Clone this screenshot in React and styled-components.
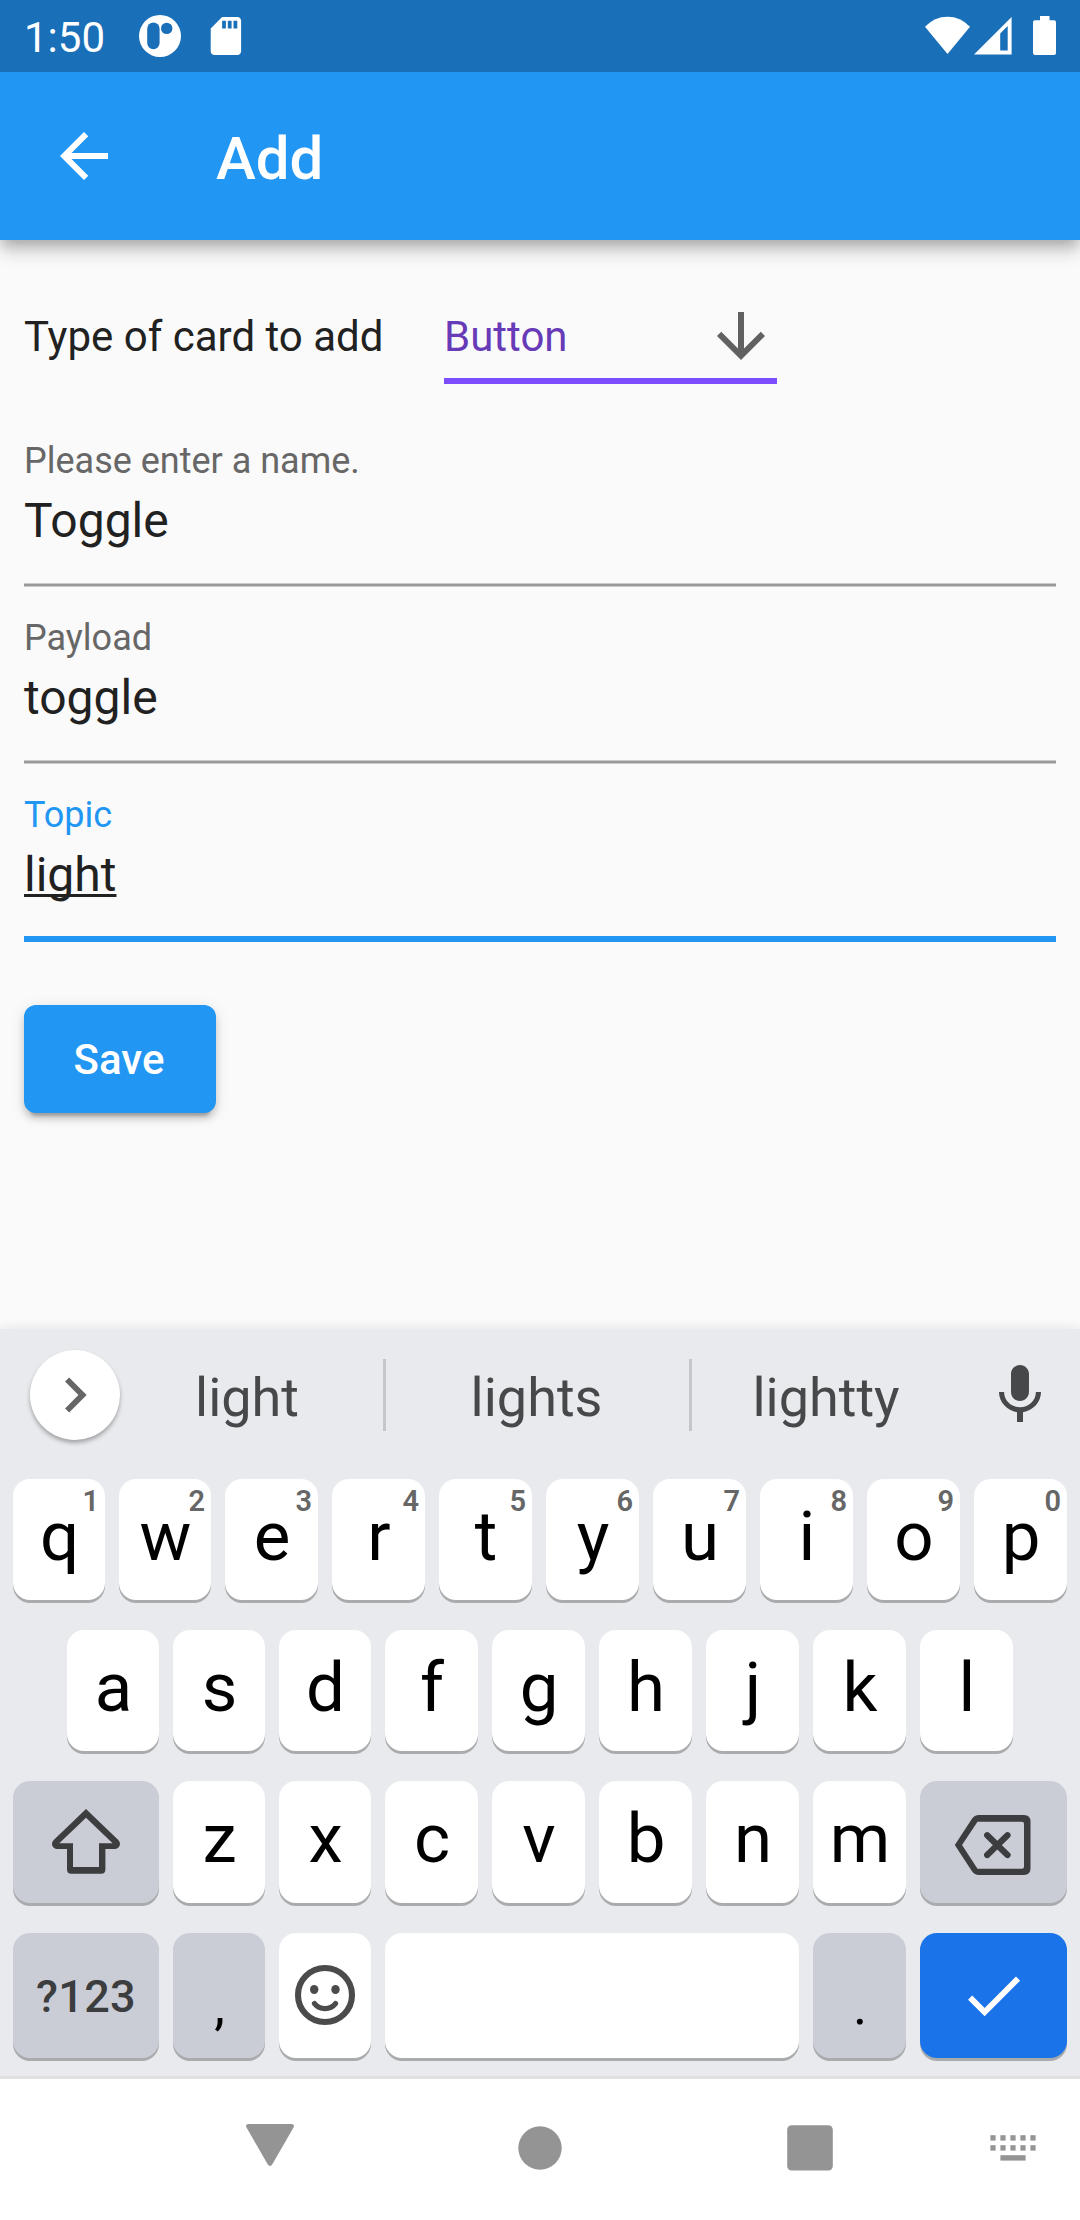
import React from "react";
import styled, { createGlobalStyle } from "styled-components";

const GlobalStyle = createGlobalStyle`
  * { box-sizing: border-box; }
  body { margin: 0; background: #fafafa; }
  svg { display: block; flex: none; }
`;

const Screen = styled.div`
  display: flex;
  flex-direction: column;
  width: 1080px;
  height: 2220px;
  overflow: hidden;
  background: #fafafa;
  color: #212121;
  font-family: Roboto, "Liberation Sans", sans-serif;
`;

/* Status bar */

const StatusBar = styled.div`
  position: relative;
  z-index: 1;
  display: flex;
  justify-content: space-between;
  align-items: flex-start;
  height: 72px;
  background: #1a70b8;
  color: #fff;
`;

const Clock = styled.span`
  width: 113px;
  font-size: 42px;
  line-height: 76px;
`;

const StatusStart = styled.div`
  display: flex;
  padding-left: 24px;
`;

const StatusEnd = styled.div`
  display: flex;
`;

/* App bar */

const AppBar = styled.header`
  display: flex;
  align-items: center;
  height: 168px;
  padding-left: 48px;
  background: #2196f3;
  color: #fff;
  box-shadow: 0 6px 12px -3px rgba(0, 0, 0, 0.2), 0 12px 15px 0 rgba(0, 0, 0, 0.14),
    0 3px 30px 0 rgba(0, 0, 0, 0.08);
`;

const Title = styled.h1`
  margin: 5px 0 0 96px;
  font-size: 60px;
  font-weight: 500;
  line-height: 72px;
`;

/* Form */

const Form = styled.main`
  display: flex;
  flex-direction: column;
  flex: 1;
  padding: 60px 24px 0;
`;

const TypeRow = styled.div`
  display: flex;
  height: 84px;
  margin-bottom: 26px;
  font-size: 42px;
  line-height: 73px;
`;

const TypeLabel = styled.span`
  width: 420px;
`;

const Dropdown = styled.div`
  display: flex;
  justify-content: space-between;
  width: 333px;
  border-bottom: 6px solid #7c4dff;
  color: #673ab7;
`;

const Field = styled.div`
  display: flex;
  flex-direction: column;
  height: 177px;
  padding-top: 27px;
`;

const FieldLabel = styled.label`
  font-size: 36px;
  line-height: 48px;
  color: ${(p) => (p.$active ? "#2196f3" : "#676767")};
`;

const FieldValue = styled.span`
  align-self: flex-start;
  margin-top: 6px;
  font-size: 48px;
  line-height: 60px;
  text-decoration: ${(p) => (p.$active ? "underline 2.5px" : "none")};
  text-underline-offset: 3px;
  text-decoration-skip-ink: none;
`;

const FieldLine = styled.div`
  flex: none;
  height: ${(p) => (p.$active ? 6 : 4)}px;
  margin-top: ${(p) => (p.$active ? 31 : 32)}px;
  background: ${(p) => (p.$active ? "#2196f3" : "#999")};
  border: solid ${(p) => (p.$active ? "#2196f3" : "#c9c9c9")};
  border-width: 1px 0;
`;

const SaveButton = styled.button`
  width: 192px;
  height: 108px;
  margin-top: 64px;
  padding: 2px 2px 0 0;
  border: 0;
  border-radius: 12px;
  background: #2196f3;
  color: #fff;
  font: 500 42px/1.2 Roboto, sans-serif;
  box-shadow: 0 9px 3px -6px rgba(0, 0, 0, 0.2), 0 6px 6px 0 rgba(0, 0, 0, 0.14),
    0 3px 15px 0 rgba(0, 0, 0, 0.12);
`;

/* Keyboard */

const Keyboard = styled.section`
  height: 750px;
  background: #e8eaed;
  border-bottom: 3px solid #e0e0e0;
  box-shadow: 0 0 12px rgba(0, 0, 0, 0.1);
`;

const Strip = styled.div`
  display: flex;
  align-items: center;
  height: 150px;
  padding: 0 24px 18px 30px;
`;

const Expand = styled.div`
  display: flex;
  align-items: center;
  justify-content: center;
  width: 90px;
  height: 90px;
  border-radius: 50%;
  background: #fff;
  box-shadow: 0 3px 4px rgba(0, 0, 0, 0.3);
`;

const Suggestion = styled.span`
  width: ${(p) => p.$width}px;
  padding-right: ${(p) => p.$shift || 0}px;
  padding-top: 5px;
  font-size: 54px;
  line-height: 66px;
  text-align: center;
  color: #47484a;
`;

const Divider = styled.i`
  width: 3px;
  height: 72px;
  background: #c4c6c9;
`;

const Mic = styled.div`
  margin-left: 24px;
`;

const KeyRow = styled.div`
  display: flex;
  gap: 14px;
  height: ${(p) => p.$height}px;
  margin-bottom: 30px;
  padding-left: ${(p) => p.$indent || 13}px;
`;

const keyFill = { light: "#fff", dark: "#cacdd5", accent: "#1a73e8" };

const Key = styled.div`
  position: relative;
  display: flex;
  align-items: center;
  justify-content: center;
  flex: none;
  width: ${(p) => p.$width}px;
  border-radius: 17px;
  background: ${(p) => keyFill[p.$tone || "light"]};
  box-shadow: 0 3px 0 #a9abad;
`;

const Letter = styled.span`
  padding: 0 0 6px 1px;
  font-size: 69px;
  line-height: 80px;
  color: #000;
`;

const Hint = styled.span`
  position: absolute;
  top: 5px;
  right: 6px;
  font-size: 29px;
  font-weight: 600;
  line-height: 34px;
  color: #666;
`;

const ModeText = styled.span`
  padding-top: 1px;
  font-size: 45px;
  font-weight: 500;
  letter-spacing: 0.3px;
  color: #3c3d3f;
`;

const Punctuation = styled.span`
  padding: 21px 0 0 1px;
  font-size: 54px;
  line-height: 64px;
  color: #000;
`;

const Emoji = styled.div`
  padding-bottom: 1px;
`;

/* System navigation */

const NavBar = styled.nav`
  display: flex;
  height: 141px;
  padding: 0 9px 3px 135px;
  background: #fff;
`;

const NavItem = styled.div`
  display: flex;
  align-items: center;
  justify-content: center;
  width: ${(p) => p.$width || 270}px;
`;

const Material = ({ d, size = 72, fill = "#fff" }) => (
  <svg width={size} height={size} viewBox="0 0 24 24" fill={fill}>
    <path d={d} />
  </svg>
);

const BACK = "M20 11H7.83l5.59-5.59L12 4l-8 8 8 8 1.41-1.41L7.83 13H20v-2z";
const DOWN = "M20 12l-1.41-1.41L13 16.17V4h-2v12.17l-5.58-5.59L4 12l8 8 8-8z";
const CHEVRON = "M10 6L8.59 7.41 13.17 12l-4.58 4.59L10 18l6-6z";
const CHECK = "M9 16.2L4.8 12l-1.4 1.4L9 19 21 7l-1.4-1.4L9 16.2z";
const MIC =
  "M12 14c1.66 0 2.99-1.34 2.99-3L15 5c0-1.66-1.34-3-3-3S9 3.34 9 5v6c0 1.66 1.34 3 3 3zm5.3-3c0 3-2.54 5.1-5.3 5.1S6.7 14 6.7 11H5c0 3.41 2.72 6.23 6 6.72V21h2v-3.28c3.28-.48 6-3.3 6-6.72h-1.7z";

const Notifications = () => (
  <svg width="120" height="72" viewBox="137 0 120 72" fill="#fff">
    <circle cx="160" cy="36" r="21" />
    <rect x="147.2" y="22.5" width="12.4" height="26.8" rx="6.2" fill="#1a70b8" />
    <circle cx="166.7" cy="28.4" r="5.7" fill="#1a70b8" />
    <path
      transform="translate(203.1 13.2) scale(1.9)"
      d="M18 2h-8L4.02 8 4 20c0 1.1.9 2 2 2h12c1.1 0 2-.9 2-2V4c0-1.1-.9-2-2-2zm-6 6h-2V4h2v4zm3 0h-2V4h2v4zm3 0h-2V4h2v4z"
    />
  </svg>
);

const Signals = () => (
  <svg width="180" height="72" viewBox="900 0 180 72" fill="#fff">
    <path d="M947.5 54L925 26.7Q934.500 16.800 947.500 16.800T970 26.700z" />
    <path fillRule="evenodd" d="M974 54.500L1011.600 17V54.500zM1000.200 33.500V50.400H1007.700V26z" />
    <path d="M1040 16H1049.500V20.300H1054Q1056 20.300 1056 22.300V53Q1056 55 1054 55H1035Q1033 55 1033 53V22.300Q1033 20.300 1035 20.300H1040z" />
  </svg>
);

const ShiftIcon = () => (
  <svg width="72" height="72" viewBox="50 1806 72 72" fill="#3c3d3f">
    <path
      fillRule="evenodd"
      d="M86 1809L118.300 1840C121.800 1843.500 119.500 1849 114.800 1849H105.400V1869.500Q105.400 1873.700 101.200 1873.700H71.200Q67 1873.700 67 1869.500V1849H57.200C52.500 1849 50.200 1843.500 53.700 1840zM86 1817.700L59.300 1843.300H73V1867H99V1843.300H112.600z"
    />
  </svg>
);

const BackspaceIcon = () => (
  <svg width="80" height="72" viewBox="953.500 1806 80 72" fill="#3c3d3f">
    <path
      fillRule="evenodd"
      d="M954.300 1845L971.300 1819Q974 1815 978.500 1815H1023.500Q1030 1815 1030 1821.500V1868.500Q1030 1875 1023.500 1875H978.500Q974 1875 971.300 1871zM961.500 1845L977 1868.700H1021.500Q1023.500 1868.700 1023.500 1866.700V1823.700Q1023.500 1821.700 1021.500 1821.700H977z"
    />
    <path d="M986.700 1835.300L1007 1855M1007 1835.300L986.700 1855" stroke="#3c3d3f" strokeWidth="6.300" strokeLinecap="round" />
  </svg>
);

const EmojiIcon = () => (
  <svg width="72" height="72" viewBox="0 0 72 72" fill="#4b4b4b">
    <circle cx="36" cy="36" r="27" fill="none" stroke="#4b4b4b" strokeWidth="6.100" />
    <ellipse cx="25.200" cy="30.500" rx="4.200" ry="4.600" />
    <ellipse cx="46.500" cy="30.500" rx="4.200" ry="4.600" />
    <path d="M25.500 44.600Q29.500 49.600 36 49.600T46.500 44.600" fill="none" stroke="#4b4b4b" strokeWidth="5.200" strokeLinecap="round" />
  </svg>
);

const NavIcon = ({ children }) => (
  <svg width="72" height="72" viewBox="0 0 72 72" fill="#949494">
    {children}
  </svg>
);

const topRow = [..."qwertyuiop"];
const homeRow = [..."asdfghjkl"];
const bottomRow = [..."zxcvbnm"];

const fields = [
  { label: "Please enter a name.", value: "Toggle" },
  { label: "Payload", value: "toggle" },
  { label: "Topic", value: "light", active: true },
];

export default function App() {
  return (
    <Screen>
      <GlobalStyle />
      <StatusBar>
        <StatusStart>
          <Clock>1:50</Clock>
          <Notifications />
        </StatusStart>
        <StatusEnd>
          <Signals />
        </StatusEnd>
      </StatusBar>
      <AppBar>
        <Material d={BACK} />
        <Title>Add</Title>
      </AppBar>
      <Form>
        <TypeRow>
          <TypeLabel>Type of card to add</TypeLabel>
          <Dropdown>
            Button
            <Material d={DOWN} fill="#616161" />
          </Dropdown>
        </TypeRow>
        {fields.map((f) => (
          <Field key={f.label}>
            <FieldLabel $active={f.active}>{f.label}</FieldLabel>
            <FieldValue $active={f.active}>{f.value}</FieldValue>
            <FieldLine $active={f.active} />
          </Field>
        ))}
        <SaveButton>Save</SaveButton>
      </Form>
      <Keyboard>
        <Strip>
          <Expand>
            <Material d={CHEVRON} size={70} fill="#666" />
          </Expand>
          <Suggestion $width={263} $shift={9}>light</Suggestion>
          <Divider />
          <Suggestion $width={303} $shift={2}>lights</Suggestion>
          <Divider />
          <Suggestion $width={268}>lightty</Suggestion>
          <Mic>
            <Material d={MIC} fill="#47484a" />
          </Mic>
        </Strip>
        <KeyRow $height={121}>
          {topRow.map((c, i) => (
            <Key key={c} $width={i < 2 ? 92 : 93}>
              <Letter>{c}</Letter>
              <Hint>{(i + 1) % 10}</Hint>
            </Key>
          ))}
        </KeyRow>
        <KeyRow $height={121} $indent={67}>
          {homeRow.map((c, i) => (
            <Key key={c} $width={i < 3 ? 92 : 93}>
              <Letter>{c}</Letter>
            </Key>
          ))}
        </KeyRow>
        <KeyRow $height={122}>
          <Key $width={146} $tone="dark">
            <ShiftIcon />
          </Key>
          {bottomRow.map((c, i) => (
            <Key key={c} $width={i < 2 ? 92 : 93}>
              <Letter>{c}</Letter>
            </Key>
          ))}
          <Key $width={147} $tone="dark">
            <BackspaceIcon />
          </Key>
        </KeyRow>
        <KeyRow $height={125}>
          <Key $width={146} $tone="dark">
            <ModeText>?123</ModeText>
          </Key>
          <Key $width={92} $tone="dark">
            <Punctuation>,</Punctuation>
          </Key>
          <Key $width={92}>
            <Emoji>
              <EmojiIcon />
            </Emoji>
          </Key>
          <Key $width={414} />
          <Key $width={93} $tone="dark">
            <Punctuation>.</Punctuation>
          </Key>
          <Key $width={147} $tone="accent">
            <Material d={CHECK} size={71} />
          </Key>
        </KeyRow>
      </Keyboard>
      <NavBar>
        <NavItem>
          <NavIcon>
            <path d="M14.500 12H57.500Q61 12 59.500 15.500L38.500 52Q36 56 33.500 52L12.500 15.500Q11 12 14.500 12z" />
          </NavIcon>
        </NavItem>
        <NavItem>
          <NavIcon>
            <circle cx="36" cy="36" r="21.700" />
          </NavIcon>
        </NavItem>
        <NavItem>
          <NavIcon>
            <rect x="13.200" y="13.200" width="45.600" height="45.300" rx="4.500" />
          </NavIcon>
        </NavItem>
        <NavItem $width={126}>
          <NavIcon>
            {[18.4, 28.4, 38.4, 48.4, 58.4].map((x) => (
              <React.Fragment key={x}>
                <rect x={x} y="23.200" width="5.200" height="5.400" />
                <rect x={x} y="33.200" width="5.200" height="5.400" />
              </React.Fragment>
            ))}
            <rect x="28.400" y="43.200" width="25.200" height="5.400" />
          </NavIcon>
        </NavItem>
      </NavBar>
    </Screen>
  );
}
